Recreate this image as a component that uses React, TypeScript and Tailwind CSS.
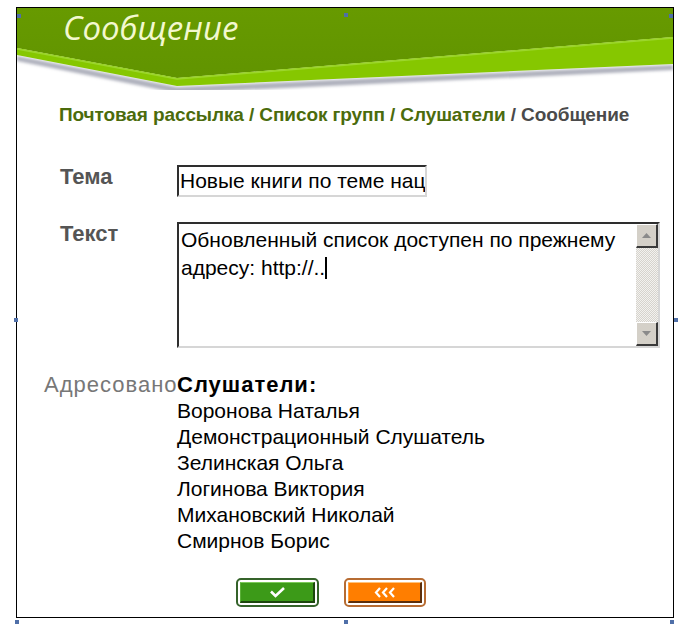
import React from "react";

const names = [
  "Воронова Наталья",
  "Демонстрационный Слушатель",
  "Зелинская Ольга",
  "Логинова Виктория",
  "Михановский Николай",
  "Смирнов Борис",
];

function Arrow({ up }: { up?: boolean }) {
  return (
    <svg width="9" height="5" viewBox="0 0 9 5">
      {up ? (
        <polygon points="0,5 9,5 4.5,0" fill="#8a8a8a" />
      ) : (
        <polygon points="0,0 9,0 4.5,5" fill="#8a8a8a" />
      )}
    </svg>
  );
}

export default function App() {
  const sans = { fontFamily: '"Liberation Sans", Arial, sans-serif' };
  return (
    <div className="relative w-[695px] h-[626px] bg-white" style={sans}>
      <div className="ml-[16px] mt-[7px] w-[658px] h-[611px] border border-black">
        {/* header */}
        <div className="relative h-[82px]">
          <svg
            className="absolute inset-0"
            width="656"
            height="82"
            viewBox="0 0 656 82"
            preserveAspectRatio="none"
          >
            <defs>
              <filter id="blur" x="-5%" y="-50%" width="110%" height="200%">
                <feGaussianBlur stdDeviation="1.6" />
              </filter>
              <linearGradient id="dark" x1="0" y1="0" x2="0" y2="1">
                <stop offset="0" stopColor="#679a00" />
                <stop offset="1" stopColor="#619400" />
              </linearGradient>
            </defs>
            <polygon
              points="0,48 160,79 656,57 656,62 160,85 0,53"
              fill="#aeb0bc"
              filter="url(#blur)"
            />
            <polygon points="0,0 656,0 656,29 160,70 0,40" fill="url(#dark)" />
            <polygon points="0,40 160,70 656,29 656,56 160,78 0,47" fill="#86c700" />
            <polyline
              points="0,41 160,71 656,30"
              fill="none"
              stroke="#9cd62c"
              strokeWidth="1.5"
            />
          </svg>
          <div
            className="relative pl-[46px] pt-[3px] text-[33px] leading-[33px] italic text-[#f3f8cf]"
            style={{ fontFamily: '"Open Sans", "DejaVu Sans", sans-serif' }}
          >
            Сообщение
          </div>
        </div>

        {/* breadcrumb */}
        <div className="mt-[13px] pl-[42px] text-[19px] tracking-[-0.1px] leading-[24px] font-bold text-[#4b6b0c]">
          Почтовая рассылка / Список групп / Слушатели{" "}
          <span className="text-[#4a4a4a]">/ Сообщение</span>
        </div>

        {/* form */}
        <div className="ml-[27px] mt-[38px] grid grid-cols-[133px_1fr]">
          <div className="pl-[16px] text-[22px] leading-[24px] font-bold text-[#555]">Тема</div>
          <div className="w-[250px] h-[32px] border-2 border-t-[#2e2e2e] border-l-[#2e2e2e] border-r-[#d6d6d6] border-b-[#d6d6d6] flex items-center pl-[1px] text-[21px] text-black overflow-hidden whitespace-nowrap">
            Новые книги по теме нац
          </div>

          <div className="mt-[25px] pl-[16px] text-[22px] leading-[24px] font-bold text-[#555]">Текст</div>
          <div className="mt-[25px] w-[483px] h-[126px] border-2 border-t-[#2e2e2e] border-l-[#2e2e2e] border-r-[#d6d6d6] border-b-[#d6d6d6] flex">
            <div className="flex-1 pl-[2px] pt-[2px] text-[21px] leading-[28px] text-black">
              Обновленный список доступен по прежнему
              <br />
              адресу: http://..
              <span className="inline-block w-[2px] h-[22px] bg-black align-[-4px]" />
            </div>
            <div className="w-[22px] flex flex-col">
              <div className="h-[24px] bg-[#d4d0c8] border-t border-l border-t-white border-l-white border-r-2 border-b-2 border-r-[#3a3a3a] border-b-[#3a3a3a] flex items-center justify-center">
                <Arrow up />
              </div>
              <div className="flex-1 bg-[repeating-conic-gradient(#d6d3cd_0_25%,#f3f2ef_0_50%)] bg-[length:2px_2px]" />
              <div className="h-[24px] bg-[#d4d0c8] border-t border-l border-t-white border-l-white border-r-2 border-b-2 border-r-[#3a3a3a] border-b-[#3a3a3a] flex items-center justify-center">
                <Arrow />
              </div>
            </div>
          </div>

          <div className="mt-[24px] text-[22px] tracking-[1px] leading-[26px] text-[#777] whitespace-nowrap">Адресовано</div>
          <div className="mt-[24px] text-[21px] leading-[26px] text-black">
            <div className="font-bold text-[22px] tracking-[1px]">Слушатели:</div>
            {names.map((n) => (
              <div key={n}>{n}</div>
            ))}
          </div>
        </div>

        {/* buttons */}
        <div className="mt-[24px] ml-[219px] flex gap-[25px]">
          <div className="w-[83px] h-[29px] rounded-[5px] border-2 border-[#35632a] bg-white p-[2px]">
            <div className="h-full bg-[#3c9a18] border-t border-l border-t-[#7cc95a] border-l-[#5bb038] border-r-2 border-b-2 border-r-[#1d470e] border-b-[#1d470e] flex items-center justify-center">
              <svg width="17" height="12" viewBox="0 0 17 12">
                <polyline
                  points="2,5.5 6.5,10 15,2"
                  fill="none"
                  stroke="white"
                  strokeWidth="2.6"
                />
              </svg>
            </div>
          </div>
          <div className="w-[82px] h-[29px] rounded-[5px] border-2 border-[#b76c32] bg-white p-[2px]">
            <div className="h-full bg-[#ff7e00] border-t border-l border-t-[#ffc27a] border-l-[#ffa040] border-r-2 border-b-2 border-r-[#5c2f0c] border-b-[#5c2f0c] flex items-center justify-center">
              <svg width="22" height="11" viewBox="0 0 22 11">
                <polyline points="6,1 2,5.5 6,10" fill="none" stroke="white" strokeWidth="2.2" />
                <polyline points="13,1 9,5.5 13,10" fill="none" stroke="white" strokeWidth="2.2" />
                <polyline points="20,1 16,5.5 20,10" fill="none" stroke="white" strokeWidth="2.2" />
              </svg>
            </div>
          </div>
        </div>
      </div>

      {/* selection handles */}
      <div className="absolute left-[17px] top-[7px] w-[4px] h-[4px] bg-[#4f6fa8]" />
      <div className="absolute left-[344px] top-[6px] w-[4px] h-[4px] bg-[#4f6fa8]" />
      <div className="absolute left-[669px] top-[7px] w-[4px] h-[4px] bg-[#4f6fa8]" />
      <div className="absolute left-[14px] top-[311px] w-[4px] h-[4px] bg-[#4f6fa8]" />
      <div className="absolute left-[674px] top-[311px] w-[4px] h-[4px] bg-[#4f6fa8]" />
      <div className="absolute left-[15px] top-[613px] w-[4px] h-[4px] bg-[#4f6fa8]" />
      <div className="absolute left-[344px] top-[613px] w-[4px] h-[4px] bg-[#4f6fa8]" />
      <div className="absolute left-[670px] top-[613px] w-[4px] h-[4px] bg-[#4f6fa8]" />
    </div>
  );
}
